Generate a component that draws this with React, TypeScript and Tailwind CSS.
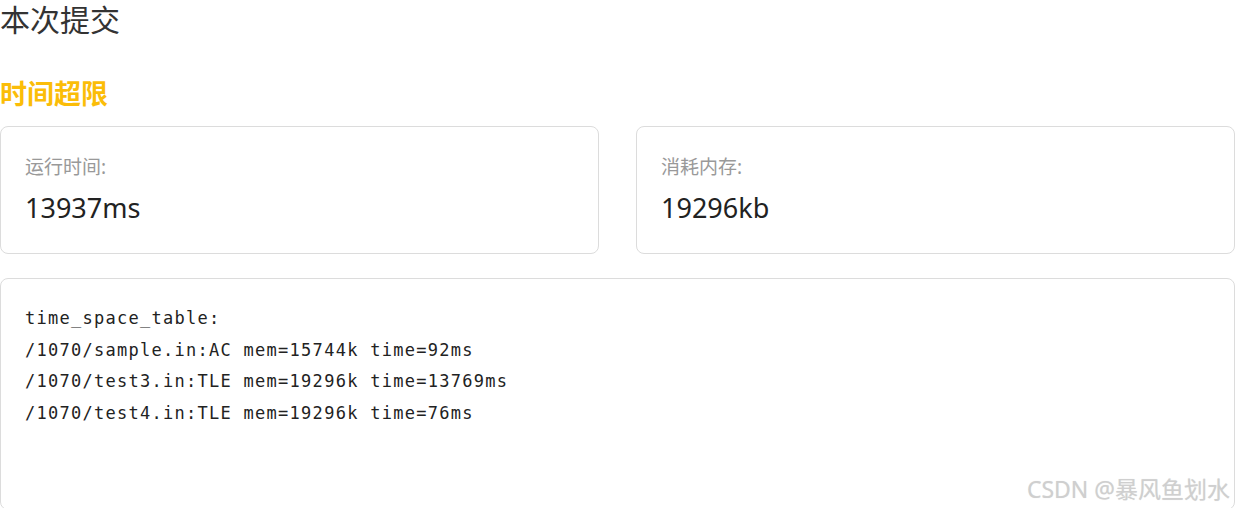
import React from "react";

const cjk = { fontFamily: '"Noto Sans", "Noto Sans CJK SC", sans-serif' };

export default function App() {
  return (
    <div className="relative w-[1235px] h-[508px] overflow-hidden bg-white" style={cjk}>
      <div className="text-[30px] leading-[40px] text-[#333]">本次提交</div>
      <div className="mt-[35px] text-[27px] leading-[38px] font-bold text-[#fbbd08]">时间超限</div>
      <div className="mt-[13px] grid grid-cols-2 gap-[37px]">
        <div className="h-[128px] rounded-[8px] border border-[#dcdcdc] pl-[24px] pt-[26px]">
          <div className="text-[19px] leading-[28px] text-[#999]">运行时间:</div>
          <div className="mt-[11px] text-[27px] leading-[32px] text-[#222]">13937ms</div>
        </div>
        <div className="h-[128px] rounded-[8px] border border-[#dcdcdc] pl-[24px] pt-[26px]">
          <div className="text-[19px] leading-[28px] text-[#999]">消耗内存:</div>
          <div className="mt-[11px] text-[27px] leading-[32px] text-[#222]">19296kb</div>
        </div>
      </div>
      <div className="mt-[24px] h-[232px] rounded-[8px] border border-[#dcdcdc] pl-[24px] pt-[24px]">
        <pre
          className="text-[17px] leading-[31.5px] text-[#222] tracking-[1.27px]"
          style={{ fontFamily: '"DejaVu Sans Mono", monospace' }}
        >
{`time_space_table:
/1070/sample.in:AC mem=15744k time=92ms
/1070/test3.in:TLE mem=19296k time=13769ms
/1070/test4.in:TLE mem=19296k time=76ms`}
        </pre>
      </div>
      <div
        className="absolute right-[5px] bottom-[5px] text-[23px] leading-[28px] text-[#cfcfcf]"
        style={{ textShadow: "0 0 1px rgba(0,0,0,0.12)" }}
      >
        CSDN @暴风鱼划水
      </div>
    </div>
  );
}
